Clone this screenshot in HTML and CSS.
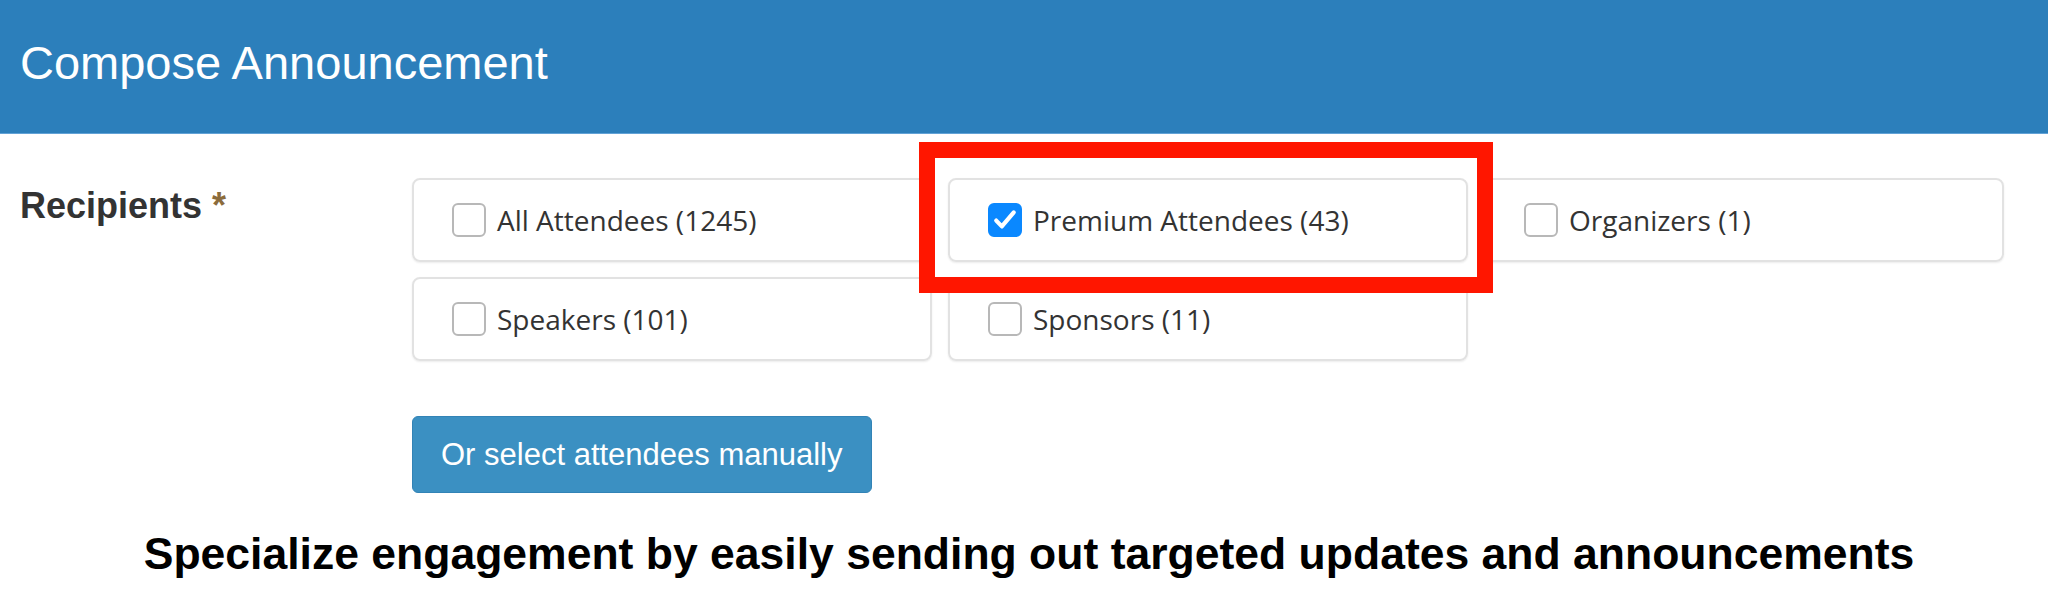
FILE: index.html
```html
<!DOCTYPE html>
<html>
<head>
    <title>Compose Announcement</title>
    <meta name="viewport" content="width=device-width, initial-scale=1">
    <link rel="stylesheet" href="styles.css">
</head>
<body>
    <header class="topbar">
        <h1>Compose Announcement</h1>
    </header>
    <main>
        <section class="field">
            <div class="field-label">Recipients <span class="req">*</span></div>
            <div class="field-body">
                <div class="groups">
                    <label class="group">
                        <span class="box"></span>
                        <span>All Attendees (1245)</span>
                    </label>
                    <label class="group">
                        <span class="box checked">
                            <svg viewBox="0 0 24 24" width="28" height="28"><path d="M4.5 12.5l4.8 5L19.5 5.5" fill="none" stroke="#fff" stroke-width="3.6" stroke-linecap="round" stroke-linejoin="round"/></svg>
                        </span>
                        <span>Premium Attendees (43)</span>
                        <span class="highlight"></span>
                    </label>
                    <label class="group">
                        <span class="box"></span>
                        <span>Organizers (1)</span>
                    </label>
                    <label class="group">
                        <span class="box"></span>
                        <span>Speakers (101)</span>
                    </label>
                    <label class="group">
                        <span class="box"></span>
                        <span>Sponsors (11)</span>
                    </label>
                </div>
                <button class="btn">Or select attendees manually</button>
            </div>
        </section>
        <p class="caption">Specialize engagement by easily sending out targeted updates and announcements</p>
    </main>
</body>
</html>
```

FILE: styles.css
```css
body {
    margin: 0;
    background-color: white;
    font-family: "Liberation Sans", Arial, sans-serif;
}

.topbar {
    background-color: #2c7fbb;
    border-bottom: 1px solid #62a2d6;
    height: 134px;
    box-sizing: border-box;
    padding: 36px 20px 0;
}

.topbar h1 {
    margin: 0;
    color: white;
    font-size: 47px;
    font-weight: normal;
    line-height: 54px;
}

.field {
    display: grid;
    grid-template-columns: 392px 1fr;
    padding: 44px 0 0 20px;
}

.field-label {
    margin-top: 7px;
    font-size: 36px;
    font-weight: bold;
    color: #333;
}

.req {
    color: #8b6c3c;
}

.groups {
    display: grid;
    grid-template-columns: repeat(3, 520px);
    column-gap: 16px;
    row-gap: 15px;
}

.group {
    position: relative;
    display: flex;
    align-items: center;
    gap: 11px;
    height: 84px;
    box-sizing: border-box;
    padding-left: 38px;
    border: 2px solid #e2e2e2;
    border-radius: 8px;
    box-shadow: 0 1px 2px rgba(0, 0, 0, 0.08);
    font-family: "Open Sans", sans-serif;
    font-size: 28px;
    color: #333;
}

.box {
    display: flex;
    align-items: center;
    justify-content: center;
    width: 34px;
    height: 34px;
    box-sizing: border-box;
    border: 2px solid #b8b8b8;
    border-radius: 6px;
    background-color: white;
}

.box.checked {
    border-color: #0a88ff;
    background-color: #0a88ff;
}

.highlight {
    position: absolute;
    top: -38px;
    left: -31px;
    right: -27px;
    bottom: -33px;
    border: 16px solid #ff1600;
    z-index: 2;
    pointer-events: none;
}

.btn {
    margin-top: 55px;
    height: 77px;
    padding: 0 28px;
    background-color: #3b90c2;
    border: 1px solid #3283b6;
    border-radius: 6px;
    color: white;
    font-family: "Liberation Sans", Arial, sans-serif;
    font-size: 31px;
}

.caption {
    margin: 36px 0 0;
    padding-left: 10px;
    text-align: center;
    font-size: 44.5px;
    font-weight: bold;
    color: black;
}
```
